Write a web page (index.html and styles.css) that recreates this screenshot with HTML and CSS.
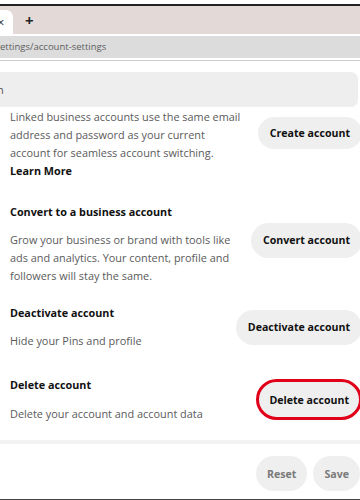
FILE: index.html
```html
<!DOCTYPE html>
<html lang="en">
<head>
    <meta charset="UTF-8">
    <meta name="viewport" content="width=device-width, initial-scale=1.0">
    <title>Account settings</title>
    <link rel="stylesheet" href="styles.css">
</head>
<body>
    <div class="browser">
        <div class="tab-strip">
            <div class="tab"><span class="tab-close">&times;</span></div>
            <span class="new-tab">+</span>
        </div>
        <div class="address-bar">ettings/account-settings</div>
        <div class="toolbar-line"></div>
    </div>

    <div class="page">
        <div class="search-box">n</div>

        <div class="setting first">
            <div class="setting-text">
                <p class="desc">Linked business accounts use the same email address and password as your current account for seamless account switching.</p>
                <a class="learn-more" href="#">Learn More</a>
            </div>
            <button class="pill">Create account</button>
        </div>

        <div class="setting convert">
            <div class="setting-text">
                <h2>Convert to a business account</h2>
                <p class="desc">Grow your business or brand with tools like ads and analytics. Your content, profile and followers will stay the same.</p>
            </div>
            <button class="pill">Convert account</button>
        </div>

        <div class="setting deactivate">
            <div class="setting-text">
                <h2>Deactivate account</h2>
                <p class="desc">Hide your Pins and profile</p>
            </div>
            <button class="pill">Deactivate account</button>
        </div>

        <div class="setting delete">
            <div class="setting-text">
                <h2>Delete account</h2>
                <p class="desc">Delete your account and account data</p>
            </div>
            <button class="pill highlighted">Delete account</button>
        </div>

        <div class="footer">
            <button class="pill muted">Reset</button>
            <button class="pill muted">Save</button>
        </div>
    </div>
    <div class="bottom-line"></div>
</body>
</html>
```

FILE: styles.css
```css
body {
    margin: 0;
    width: 360px;
    height: 500px;
    overflow: hidden;
    background-color: white;
    font-family: "Open Sans", Arial, sans-serif;
    color: #111;
}
.browser {
    padding-top: 4px;
}
.tab-strip {
    height: 28px;
    border-top: 2px solid #222;
    background-color: #e3dad7;
    display: flex;
    align-items: flex-end;
}
.tab {
    width: 13px;
    height: 24px;
    background-color: white;
    border-top-right-radius: 7px;
    display: flex;
    align-items: center;
}
.tab-close {
    font-size: 13px;
    margin-left: -3px;
    color: #333;
}
.new-tab {
    font-size: 15px;
    font-weight: bold;
    margin-left: 12px;
    margin-bottom: 4px;
    color: #222;
}
.address-bar {
    margin-top: 2px;
    height: 22px;
    line-height: 22px;
    background-color: #dcdcdc;
    color: #5e5e5e;
    font-size: 9.5px;
}
.toolbar-line {
    margin-top: 2px;
    height: 1px;
    background-color: #cfcfcf;
}
.page {
    padding-top: 11px;
}
.search-box {
    height: 35px;
    line-height: 35px;
    width: 358px;
    background-color: #eeeeee;
    border-radius: 0 7px 7px 0;
    color: #555;
    font-size: 11px;
    text-indent: -3px;
}
.setting {
    display: flex;
    align-items: center;
    justify-content: space-between;
    padding-left: 10px;
    margin-right: -2px;
}
.setting h2 {
    margin: 0 0 10px;
    font-size: 10.8px;
    line-height: 18px;
    font-weight: bold;
    color: #111;
}
.desc {
    margin: 0;
    font-size: 10.9px;
    line-height: 18px;
    color: #5a5a5a;
}
.learn-more {
    display: block;
    font-size: 10.8px;
    line-height: 18px;
    font-weight: bold;
    color: #111;
    text-decoration: none;
}
.first {
    margin-top: 1px;
    align-items: flex-start;
}
.first .setting-text {
    width: 238px;
}
.first .pill {
    margin-top: 9px;
    height: 32px;
}
.convert {
    margin-top: 23px;
}
.convert .setting-text {
    width: 232px;
}
.convert .pill {
    margin-bottom: 8px;
}
.deactivate {
    margin-top: 19px;
}
.delete {
    margin-top: 26px;
}
.delete h2 {
    margin-bottom: 11px;
}
.pill {
    flex-shrink: 0;
    height: 35px;
    border: none;
    border-radius: 18px;
    background-color: #efefef;
    color: #111;
    font-family: "Open Sans", Arial, sans-serif;
    font-size: 10.6px;
    font-weight: bold;
    padding: 0 12px;
}
.highlighted {
    height: 41px;
    padding: 0 10px;
    border: 3px solid #e0001a;
    border-radius: 21px;
}
.footer {
    margin-top: 17px;
    border-top: 4px solid #f3f3f3;
    padding-top: 12px;
    display: flex;
    justify-content: flex-end;
    gap: 6px;
}
.muted {
    color: #7a7a7a;
    padding: 0 11px;
}
.bottom-line {
    margin-top: 8px;
    height: 2px;
    background-color: #444;
}
```
